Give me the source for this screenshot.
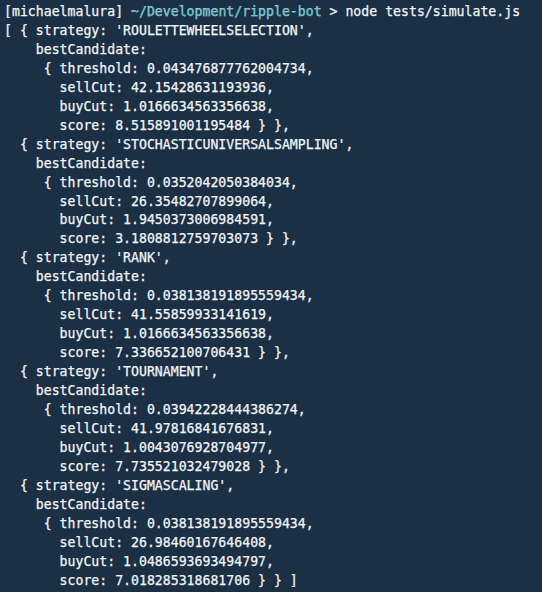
import React from "react";

const lines: React.ReactNode[] = [
  <>
    [michaelmalura] <span className="text-[#3bbcc4]">~/Development/ripple-bot</span> &gt; node tests/simulate.js
  </>,
  "[ { strategy: 'ROULETTEWHEELSELECTION',",
  "    bestCandidate:",
  "     { threshold: 0.043476877762004734,",
  "       sellCut: 42.15428631193936,",
  "       buyCut: 1.0166634563356638,",
  "       score: 8.515891001195484 } },",
  "  { strategy: 'STOCHASTICUNIVERSALSAMPLING',",
  "    bestCandidate:",
  "     { threshold: 0.0352042050384034,",
  "       sellCut: 26.35482707899064,",
  "       buyCut: 1.9450373006984591,",
  "       score: 3.1808812759703073 } },",
  "  { strategy: 'RANK',",
  "    bestCandidate:",
  "     { threshold: 0.038138191895559434,",
  "       sellCut: 41.55859933141619,",
  "       buyCut: 1.0166634563356638,",
  "       score: 7.336652100706431 } },",
  "  { strategy: 'TOURNAMENT',",
  "    bestCandidate:",
  "     { threshold: 0.03942228444386274,",
  "       sellCut: 41.97816841676831,",
  "       buyCut: 1.0043076928704977,",
  "       score: 7.735521032479028 } },",
  "  { strategy: 'SIGMASCALING',",
  "    bestCandidate:",
  "     { threshold: 0.038138191895559434,",
  "       sellCut: 26.98460167646408,",
  "       buyCut: 1.0486593693494797,",
  "       score: 7.018285318681706 } } ]",
];

export default function App() {
  return (
    <div className="w-[542px] h-[592px] overflow-hidden bg-[#1b2f45] pl-[4px] pt-[3px]">
      <div className="font-['DejaVu_Sans_Mono',monospace] text-[13.2px] leading-[18.95px] text-[#f2f6f8] whitespace-pre [-webkit-text-stroke:0.25px_#f2f6f8]">
        {lines.map((l, i) => (
          <div key={i}>{l}</div>
        ))}
      </div>
    </div>
  );
}
